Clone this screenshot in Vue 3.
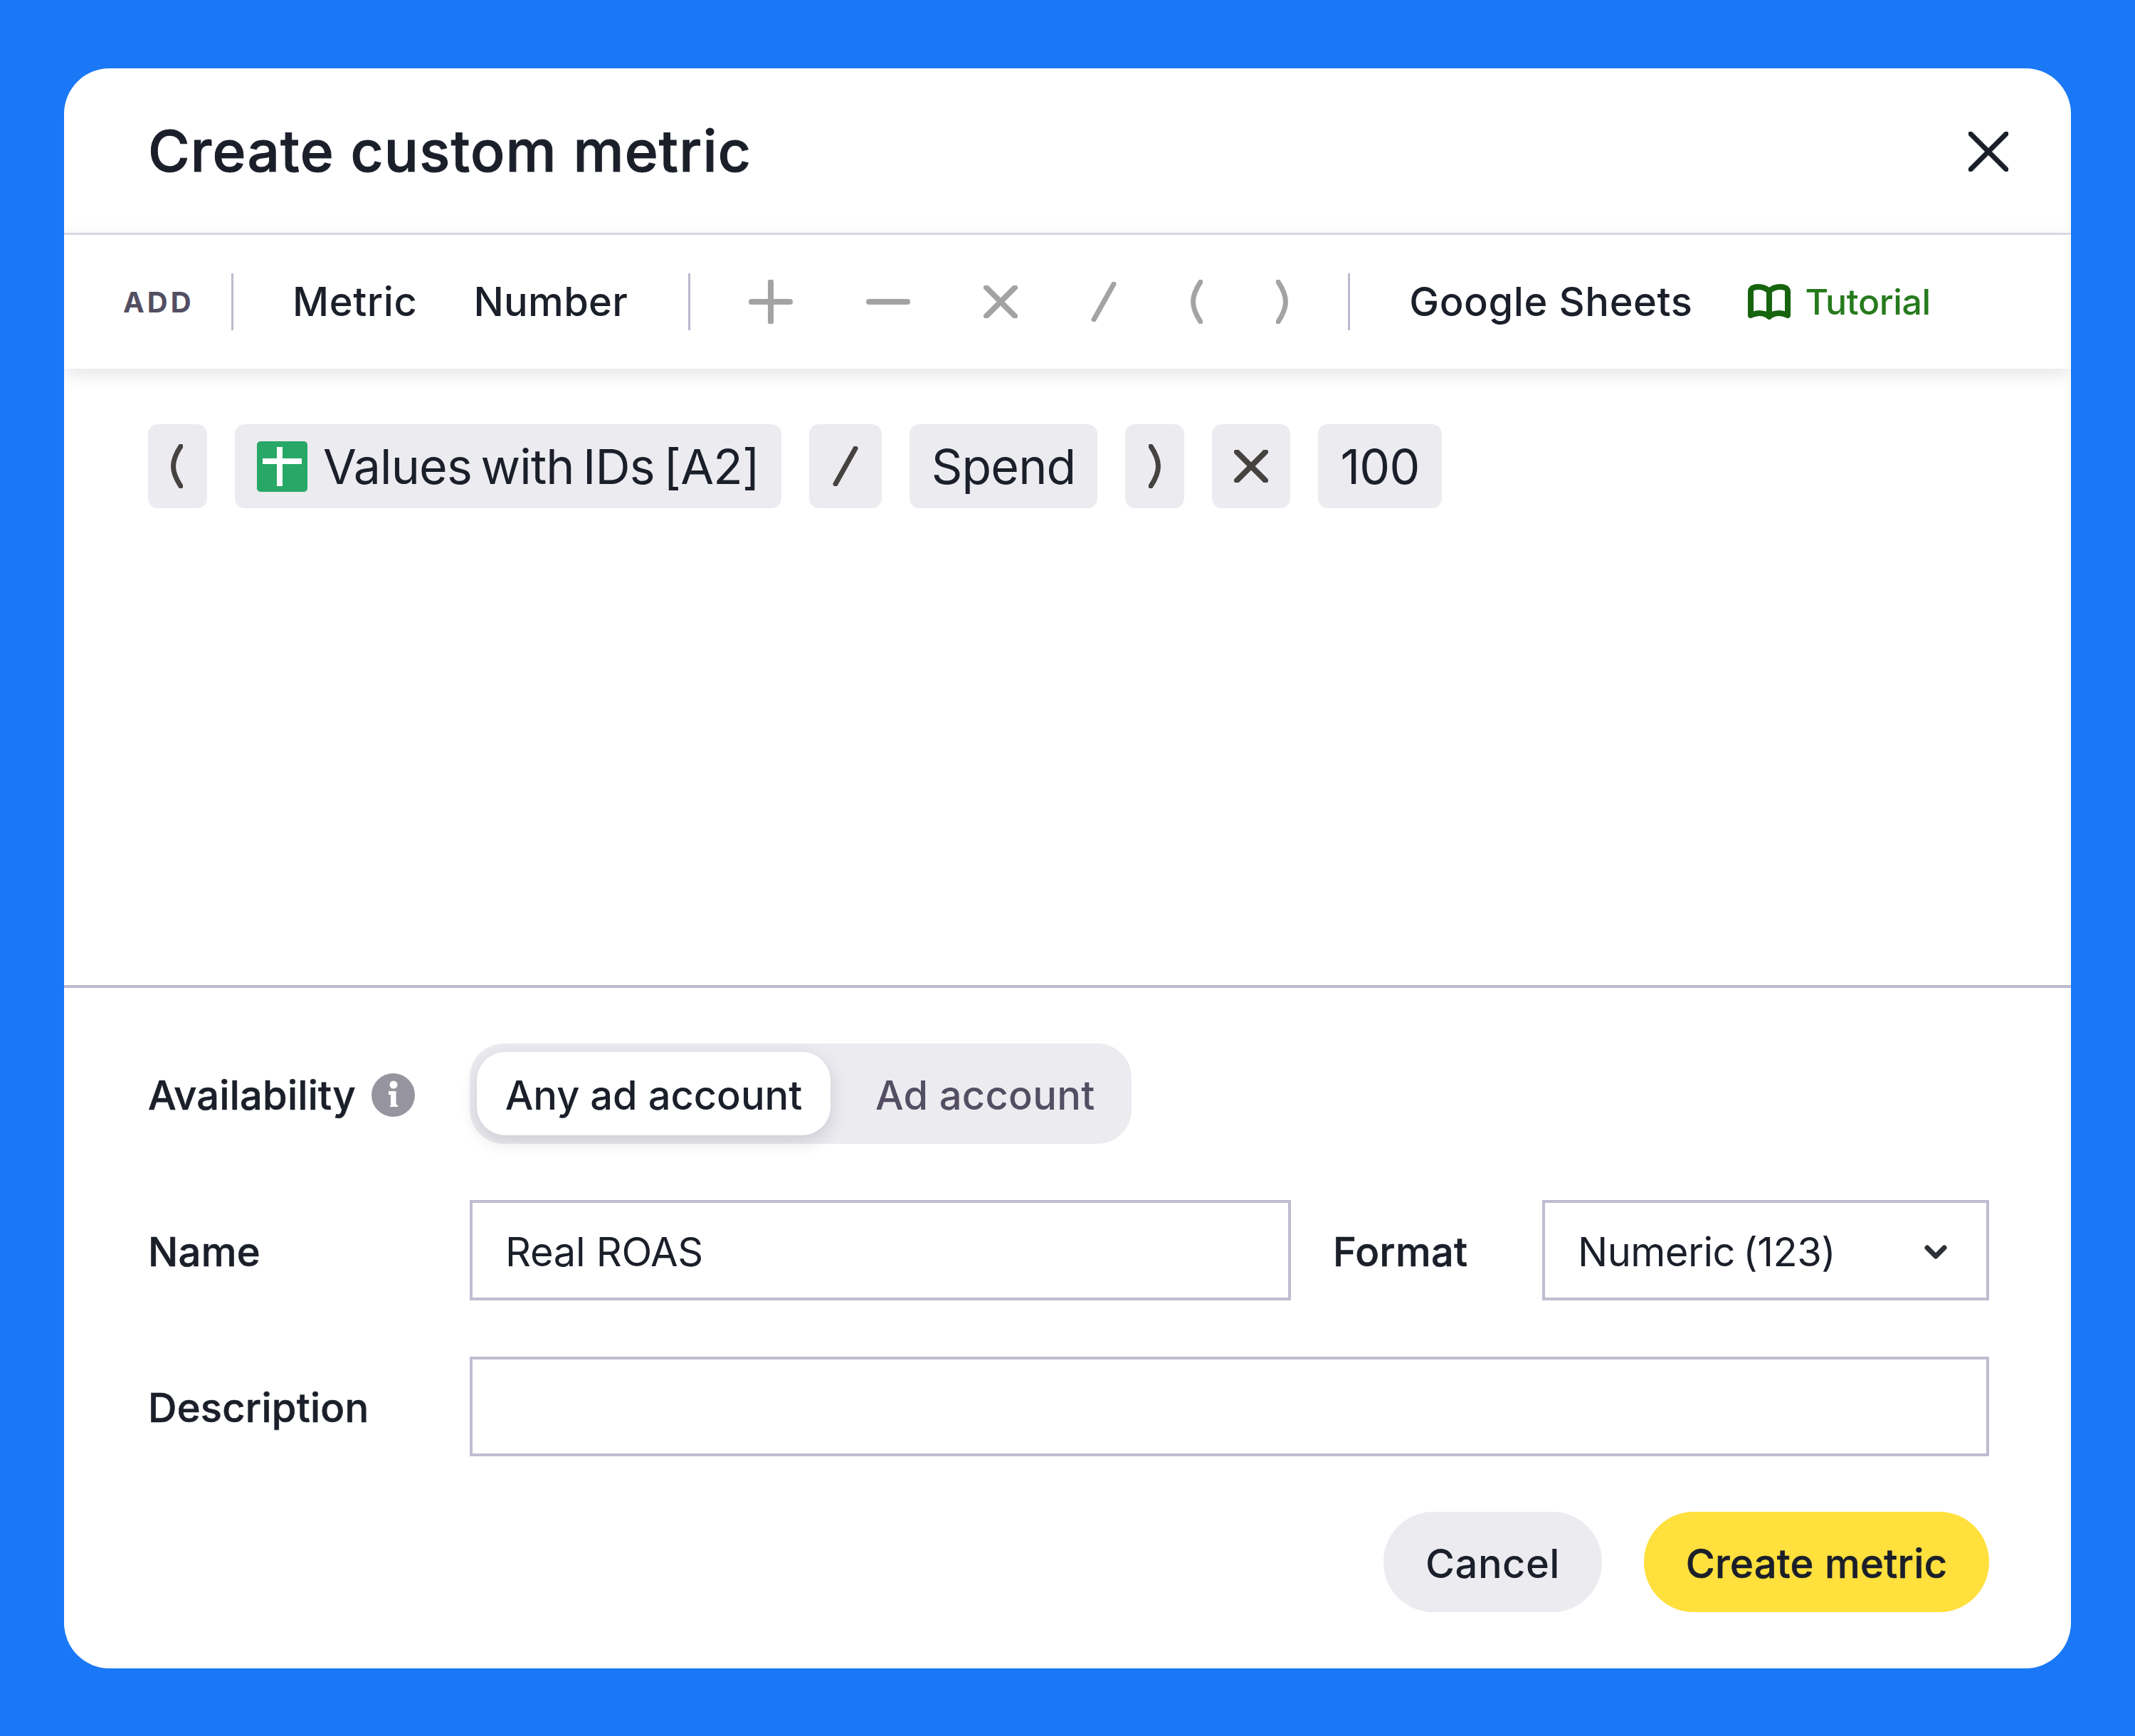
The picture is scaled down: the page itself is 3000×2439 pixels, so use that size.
<template>
  <div class="page">
    <div class="dialog">
      <div class="dialog-head">
        <h1 class="title">Create custom metric</h1>
        <svg class="close" width="56" height="56" viewBox="0 0 56 56" fill="none">
          <path d="M3 3 53 53M53 3 3 53" stroke="#1b1f2a" stroke-width="7" stroke-linecap="round" />
        </svg>
      </div>

      <div class="toolbar">
        <span class="add-label">ADD</span>
        <span class="tool-sep tool-sep--first"></span>
        <span class="tool-link tool-link--metric">Metric</span>
        <span class="tool-link tool-link--number">Number</span>
        <span class="tool-sep tool-sep--second"></span>
        <div class="ops">
          <svg width="62" height="62" viewBox="0 0 62 62" fill="none">
            <path d="M31 3V59M4 31H58" stroke="#a3a3a3" stroke-width="8" stroke-linecap="round" />
          </svg>
          <svg width="62" height="62" viewBox="0 0 62 62" fill="none">
            <path d="M4 31H58" stroke="#a3a3a3" stroke-width="8" stroke-linecap="round" />
          </svg>
          <svg width="48" height="46" viewBox="0 0 48 46" fill="none">
            <path d="M4 3 44 43M44 3 4 43" stroke="#a3a3a3" stroke-width="8" stroke-linecap="round" />
          </svg>
          <svg width="36" height="56" viewBox="0 0 36 56" fill="none">
            <path d="M32 3 4 53" stroke="#a3a3a3" stroke-width="7" stroke-linecap="round" />
          </svg>
          <svg width="18" height="62" viewBox="0 0 18 62" fill="none">
            <path d="M15 3C1 24 1 38 15 59" stroke="#a3a3a3" stroke-width="7" stroke-linecap="round" />
          </svg>
          <svg width="18" height="62" viewBox="0 0 18 62" fill="none">
            <path d="M3 3C17 24 17 38 3 59" stroke="#a3a3a3" stroke-width="7" stroke-linecap="round" />
          </svg>
        </div>
        <span class="tool-sep tool-sep--third"></span>
        <span class="tool-link tool-link--sheets">Google Sheets</span>
        <span class="tutorial">
          <svg width="60" height="50" viewBox="0 0 60 50" fill="none">
            <path d="M30 10C26 6 20 4 14 4C10 4 8 5 6 6C5 7 4 9 4 10V44C9 42 12 41 16 41C21 41 26 42 30 46C34 42 39 41 44 41C48 41 51 42 56 44V10C56 9 55 7 54 6C52 5 50 4 46 4C40 4 34 6 30 10ZM30 10V44" stroke="#17640f" stroke-width="8" stroke-linejoin="round" />
          </svg>
          Tutorial
        </span>
      </div>

      <div class="formula">
        <span class="chip chip--open">
          <svg width="18" height="62" viewBox="0 0 18 62" fill="none">
            <path d="M15 3C1 24 1 38 15 59" stroke="#454240" stroke-width="7" stroke-linecap="round" />
          </svg>
        </span>
        <span class="chip chip--sheet">
          <svg width="71" height="71" viewBox="0 0 71 71">
            <rect width="71" height="71" rx="5" fill="#27a866" />
            <path d="M24 8h8v55h-8zM4 24h55v8H4z" fill="#fff" transform="translate(4 0)" />
          </svg>
          <span class="chip-text">Values with IDs [A2]</span>
        </span>
        <span class="chip chip--slash">
          <svg width="36" height="56" viewBox="0 0 36 56" fill="none">
            <path d="M32 3 4 53" stroke="#454240" stroke-width="7" stroke-linecap="round" />
          </svg>
        </span>
        <span class="chip chip--spend"><span class="chip-text">Spend</span></span>
        <span class="chip chip--close">
          <svg width="18" height="62" viewBox="0 0 18 62" fill="none">
            <path d="M3 3C17 24 17 38 3 59" stroke="#454240" stroke-width="7" stroke-linecap="round" />
          </svg>
        </span>
        <span class="chip chip--times">
          <svg width="48" height="46" viewBox="0 0 48 46" fill="none">
            <path d="M4 3 44 43M44 3 4 43" stroke="#454240" stroke-width="8" stroke-linecap="round" />
          </svg>
        </span>
        <span class="chip chip--num"><span class="chip-text">100</span></span>
      </div>

      <div class="form">
        <div class="form-row">
          <div class="form-label">
            Availability
            <svg class="info" width="61" height="61" viewBox="0 0 61 61">
              <circle cx="30.5" cy="30.5" r="30.5" fill="#96949f" />
              <circle cx="31" cy="16" r="5.5" fill="#fff" />
              <path d="M24 25h10.5v17a3 3 0 0 0 2.5 3v2H26v-2h1V30h-3z" fill="#fff" />
            </svg>
          </div>
          <div class="segment">
            <span class="segment-tab segment-tab--active">Any ad account</span>
            <span class="segment-tab">Ad account</span>
          </div>
        </div>

        <div class="form-row">
          <div class="form-label">Name</div>
          <div class="field field--name">Real ROAS</div>
          <div class="form-label form-label--format">Format</div>
          <div class="field field--format">
            <span class="format-value">Numeric (123)</span>
            <svg width="32" height="20" viewBox="0 0 32 20" fill="none">
              <path d="M4 4 16 16 28 4" stroke="#2d3038" stroke-width="7" stroke-linecap="round" stroke-linejoin="round" />
            </svg>
          </div>
        </div>

        <div class="form-row">
          <div class="form-label">Description</div>
          <div class="field field--desc"></div>
        </div>

        <div class="actions">
          <button class="btn btn--cancel">Cancel</button>
          <button class="btn btn--create">Create metric</button>
        </div>
      </div>
    </div>
  </div>
</template>

<script setup>
</script>

<style>
body {
  background: #1a78f6;
}
</style>

<style scoped>
.page {
  min-height: 2439px;
  padding: 96px 90px 95px;
  box-sizing: border-box;
  font-family: Inter, "Liberation Sans", sans-serif;
  color: #1b1f2a;
}
.dialog {
  height: 2248px;
  background: #fff;
  border-radius: 64px;
  overflow: hidden;
  display: flex;
  flex-direction: column;
}
.dialog-head {
  height: 231px;
  padding: 0 88px 0 118px;
  display: flex;
  align-items: center;
  justify-content: space-between;
  border-bottom: 3px solid #dfdde9;
  flex: none;
}
.title {
  margin: 0;
  font-size: 80px;
  font-weight: 500;
  letter-spacing: 1.2px;
  -webkit-text-stroke: 1px #1b1f2a;
}
.close {
  margin-top: 2px;
}
.toolbar {
  height: 188px;
  flex: none;
  padding: 0 0 0 83px;
  display: flex;
  align-items: center;
  position: relative;
  box-shadow: 0 6px 24px rgba(40, 36, 70, 0.13);
}
.add-label {
  width: 96px;
  font-size: 40px;
  font-weight: 700;
  letter-spacing: 4px;
  color: #544e63;
  margin-right: 56px;
}
.tool-sep {
  width: 3px;
  height: 80px;
  background: #bdb9ce;
  flex: none;
}
.tool-link {
  font-size: 56px;
  font-weight: 500;
  white-space: nowrap;
}
.tool-link--metric {
  margin-left: 83px;
  letter-spacing: 0.6px;
}
.tool-link--number {
  margin-left: 79px;
  margin-right: 85px;
  letter-spacing: 0.3px;
}
.ops {
  margin-left: 82px;
  margin-right: 83px;
  display: flex;
  align-items: center;
  gap: 103px;
}
.tool-link--sheets {
  margin-left: 83px;
  letter-spacing: 0.6px;
}
.tutorial {
  margin-left: 77px;
  display: flex;
  align-items: center;
  gap: 21px;
  font-size: 50px;
  font-weight: 500;
  letter-spacing: -0.4px;
  color: #267a1c;
}
.formula {
  flex: 1;
  padding: 78px 0 0 118px;
  display: flex;
  align-items: flex-start;
  gap: 39px;
}
.chip {
  height: 118px;
  box-sizing: border-box;
  background: #ecebf0;
  border-radius: 14px;
  display: flex;
  align-items: center;
  justify-content: center;
  font-size: 68px;
  white-space: nowrap;
}
.chip-text {
  letter-spacing: -0.8px;
  word-spacing: -6px;
}
.chip--open { width: 83px; padding-right: 4px; }
.chip--sheet { width: 768px; gap: 22px; justify-content: flex-start; padding-left: 31px; }
.chip--slash { width: 102px; }
.chip--spend { width: 264px; }
.chip--close { width: 83px; }
.chip--times { width: 110px; }
.chip--num { width: 174px; }
.form {
  flex: none;
  height: 960px;
  box-sizing: border-box;
  border-top: 4px solid #bdb9ce;
  padding: 78px 115px 0 118px;
  display: flex;
  flex-direction: column;
  gap: 79px;
}
.form-row {
  display: flex;
  align-items: center;
}
.form-label {
  width: 452px;
  flex: none;
  box-sizing: border-box;
  padding-top: 4px;
  font-size: 56px;
  font-weight: 500;
  letter-spacing: 0.25px;
  -webkit-text-stroke: 0.6px #1b1f2a;
  display: flex;
  align-items: center;
  gap: 22px;
}
.form-label--format {
  width: 294px;
  margin-left: 59px;
}
.segment {
  height: 141px;
  width: 930px;
  box-sizing: border-box;
  padding: 12px 10px;
  background: #ecebf0;
  border-radius: 48px;
  display: flex;
  align-items: center;
}
.segment-tab {
  font-size: 56px;
  font-weight: 500;
  letter-spacing: 0.3px;
  color: #544e63;
  margin-left: 63px;
  padding-top: 4px;
}
.segment-tab--active {
  width: 497px;
  height: 117px;
  box-sizing: border-box;
  flex: none;
  margin-left: 0;
  background: #fff;
  color: #1b1f2a;
  letter-spacing: 0;
  border-radius: 40px;
  display: flex;
  align-items: center;
  justify-content: center;
  box-shadow: 0 8px 24px rgba(40, 36, 70, 0.16);
}
.field {
  height: 141px;
  box-sizing: border-box;
  border: 4px solid #c0bcd0;
  padding: 4px 46px 0;
  font-size: 56px;
  letter-spacing: -0.3px;
  display: flex;
  align-items: center;
}
.field--name {
  width: 1154px;
  flex: none;
}
.field--format {
  flex: 1;
  justify-content: space-between;
  padding-right: 55px;
}
.format-value {
  letter-spacing: -0.5px;
  word-spacing: -4px;
}
.field--desc {
  flex: 1;
  height: 140px;
}
.actions {
  display: flex;
  justify-content: flex-end;
  gap: 59px;
  margin-top: -1px;
}
.btn {
  height: 141px;
  border: none;
  border-radius: 70px;
  font-family: inherit;
  font-size: 56px;
  font-weight: 500;
  color: #1b1f2a;
  padding: 4px 0 0;
}
.btn--cancel {
  width: 307px;
  background: #ecebf0;
  letter-spacing: 0.5px;
}
.btn--create {
  width: 485px;
  background: #ffe03d;
  letter-spacing: 0.3px;
  -webkit-text-stroke: 0.6px #1b1f2a;
}
</style>
